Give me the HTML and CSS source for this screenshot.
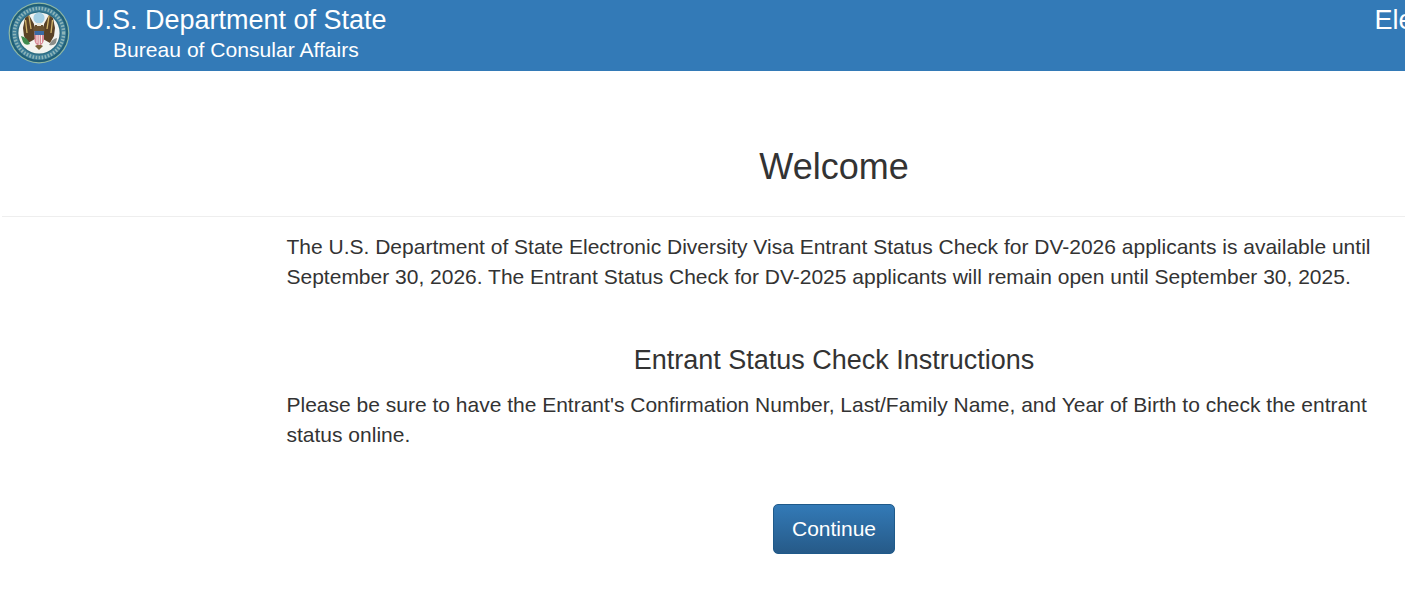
FILE: index.html
```html
<!DOCTYPE html>
<html lang="en">
<head>
<meta charset="utf-8">
<title>Entrant Status Check</title>
<link rel="stylesheet" href="styles.css">
</head>
<body>
<header class="site-header">
  <svg class="seal" viewBox="0 0 62 62" aria-label="Seal of the U.S. Department of State">
    <circle cx="31" cy="31" r="30.4" fill="#8fb8a4"/>
    <circle cx="31" cy="31" r="29.200" fill="#1f5f78"/>
    <circle cx="31" cy="31" r="27" fill="#3f7f9a"/>
    <circle cx="31" cy="31" r="24.600" fill="none" stroke="#8db5b8" stroke-width="3.400" stroke-dasharray="1.600 1.500"/>
    <circle cx="31" cy="31" r="21.800" fill="#2a6a7e"/>
    <circle cx="31" cy="31" r="20.600" fill="#f3f4f0"/>
    <circle cx="31" cy="16" r="5.600" fill="#a5d0e4"/>
    <path d="M26 22 L21 13 L17 16 L15 26 L16 34 L20 41 L27 37 Z" fill="#5a4226"/>
    <path d="M36 22 L41 13 L45 16 L47 26 L46 34 L42 41 L35 37 Z" fill="#5a4226"/>
    <path d="M21 14 L23 27 M41 14 L39 27 M17.500 18 L19 31 M44.500 18 L43 31" stroke="#d2b66c" stroke-width="1.300" fill="none"/>
    <path d="M27 23 h8 l2 4 l-1 4 h-10 l-1 -4 Z" fill="#6a5230"/>
    <path d="M29 21 h4 v3 h-4 Z" fill="#e9e6d8"/>
    <path d="M26.500 29 h9.500 v8 q0 5 -5 7 q-5 -2 -4.500 -7 Z" fill="#d98a96"/>
    <path d="M26.500 29 h9.500 v4 h-9.500 Z" fill="#3a6aa3"/>
    <path d="M29 33 v8 M31.200 33 v10 M33.500 33 v8" stroke="#f6e9e7" stroke-width="1"/>
    <path d="M13 34 q6 1 9 8 q-5 2 -7 -2 Z" fill="#3f8a4e"/>
    <path d="M49 36 q-5 1 -8 7 q5 1 7 -2 Z" fill="#8b8d88"/>
    <path d="M27 44 l4 4 l4 -4 l-2 -1 h-4 Z" fill="#7a6236"/>
  </svg>
  <div class="agency">
    <div class="agency-name">U.S. Department of State</div>
    <div class="agency-bureau">Bureau of Consular Affairs</div>
  </div>
  <div class="app-title">Electronic Diversity Visa</div>
</header>
<main class="page">
  <h1 class="page-title">Welcome</h1>
  <hr class="rule">
  <section class="content">
    <p class="notice">The U.S. Department of State Electronic Diversity Visa Entrant Status Check for DV-2026 applicants is available until September 30, 2026. The Entrant Status Check for DV-2025 applicants will remain open until September 30, 2025.</p>
    <h2 class="section-title">Entrant Status Check Instructions</h2>
    <p class="instructions">Please be sure to have the Entrant's Confirmation Number, Last/Family Name, and Year of Birth to check the entrant status online.</p>
    <div class="actions"><button class="btn" type="button">Continue</button></div>
  </section>
</main>
</body>
</html>
```
FILE: styles.css
```css
* { box-sizing: border-box; }
html, body { margin: 0; overflow: hidden; }
body {
  width: 1405px;
  height: 595px;
  background: #fff;
  color: #333;
  font-family: "Liberation Sans", Arial, sans-serif;
  font-size: 21px;
  line-height: 30px;
}
.site-header {
  display: flex;
  align-items: flex-start;
  height: 71px;
  background: #337ab7;
  color: #fff;
  white-space: nowrap;
  overflow: hidden;
  padding: 2px 0 0 8px;
}
.seal { flex: none; width: 62px; height: 62px; }
.agency { flex: none; width: 1304.5px; padding: 2px 0 0 15px; }
.agency-name { font-size: 27px; line-height: 32px; }
.agency-bureau { font-size: 21.1px; line-height: 24px; margin: 2px 0 0 28px; }
.app-title { flex: none; font-size: 27px; line-height: 32px; padding-top: 2px; }
.page-title {
  margin: 0 0 0 286px;
  width: 1096px;
  padding-top: 74px;
  text-align: center;
  font-size: 36px;
  line-height: 44px;
  font-weight: 400;
}
.rule { margin: 27px 0 0 2px; border: 0; border-top: 1px solid #eee; }
.content { margin-left: 286.5px; width: 1095px; padding-top: 15px; }
.notice, .instructions { margin: 0; }
.section-title {
  margin: 51px 0 0;
  text-align: center;
  font-size: 27px;
  line-height: 34px;
  font-weight: 400;
}
.instructions { margin-top: 13px; }
.actions { display: flex; justify-content: center; margin-top: 54px; }
.btn {
  width: 122px;
  height: 50px;
  border: 1px solid #1f5a8a;
  border-radius: 5px;
  background: linear-gradient(#337ab7, #265a88);
  color: #fff;
  font: 21px/28px "Liberation Sans", Arial, sans-serif;
  padding: 0;
}
```
